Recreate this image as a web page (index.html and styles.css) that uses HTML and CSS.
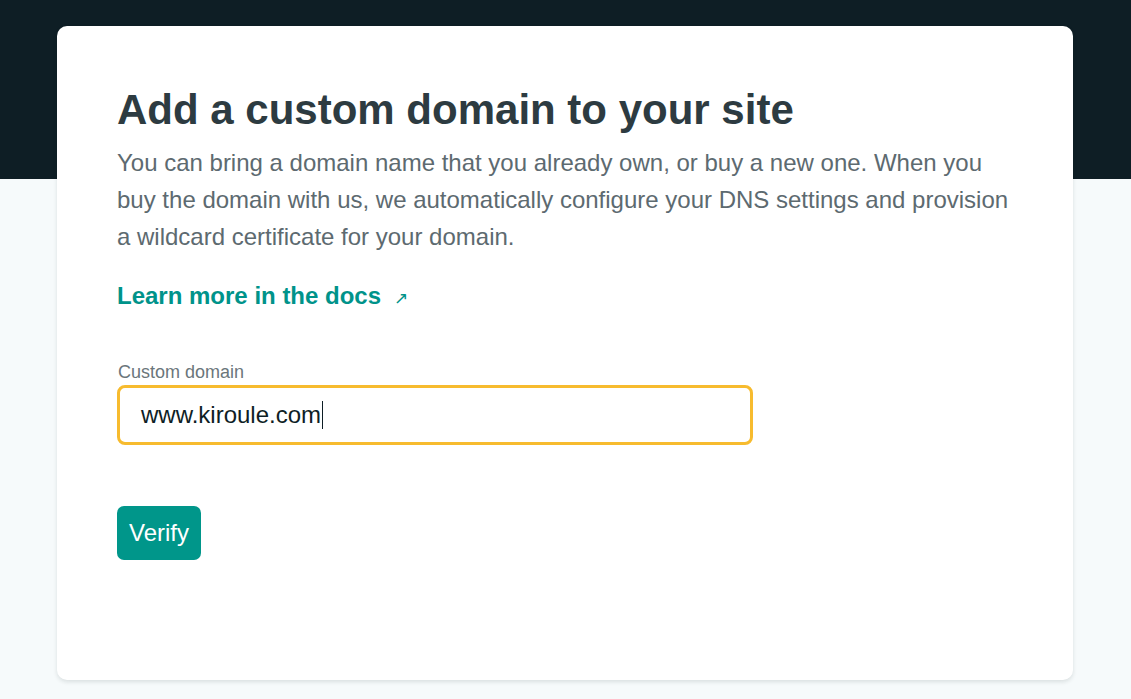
FILE: index.html
```html
<!DOCTYPE html>
<html>
<head>
<meta charset="utf-8">
<link rel="stylesheet" href="styles.css">
</head>
<body>
<div class="band"></div>
<main class="page">
  <section class="card">
    <h1 class="title">Add a custom domain to your site</h1>
    <p class="lead">You can bring a domain name that you already own, or buy a new one. When you buy the domain with us, we automatically configure your DNS settings and provision a wildcard certificate for your domain.</p>
    <a class="docs" href="#">Learn more in the docs <span class="arrow">↗</span></a>
    <label class="field-label" for="domain">Custom domain</label>
    <div class="input"><span class="value">www.kiroule.com</span><span class="caret"></span></div>
    <button class="btn">Verify</button>
  </section>
</main>
</body>
</html>
```
FILE: styles.css
```css
html, body { margin: 0; padding: 0; }
body {
  background: #f6fafb;
  font-family: "Liberation Sans", Arial, sans-serif;
  width: 1131px;
  height: 699px;
  overflow: hidden;
  position: relative;
}
.band {
  position: absolute;
  left: 0; top: 0; right: 0;
  height: 179px;
  background: #0e1e25;
}
.page {
  position: relative;
  padding: 26px 58px 0 57px;
}
.card {
  background: #fff;
  border-radius: 10px;
  box-shadow: 0 2px 4px rgba(14,30,37,0.12);
  height: 654px;
  box-sizing: border-box;
  padding: 60px 60px 0 60px;
  display: flex;
  flex-direction: column;
  align-items: flex-start;
}
.title {
  margin: 0;
  font-size: 42px;
  line-height: 48px;
  font-weight: 700;
  color: #2d3b41;
}
.lead {
  margin: 10px 0 0 0;
  font-size: 24px;
  line-height: 37px;
  color: #5d6a70;
}
.docs {
  margin-top: 26px;
  font-size: 24px;
  line-height: 30px;
  font-weight: 700;
  color: #00938a;
  text-decoration: none;
}
.arrow {
  font-size: 17px;
  font-weight: 400;
  margin-left: 6px;
}
.field-label {
  margin-top: 47px;
  margin-left: 1px;
  font-size: 18px;
  line-height: 22px;
  color: #6b767b;
}
.input {
  margin-top: 2px;
  width: 636px;
  height: 60px;
  box-sizing: border-box;
  border: 3px solid #f7bb2e;
  border-radius: 8px;
  padding: 0 0 0 21px;
  display: flex;
  align-items: center;
  font-size: 24px;
  color: #0e1e25;
}
.caret {
  display: inline-block;
  width: 1px;
  height: 28px;
  background: #0e1e25;
  margin-left: 1px;
}
.btn {
  margin-top: 61px;
  height: 54px;
  padding: 0 12px;
  border: 0;
  border-radius: 7px;
  background: #00968a;
  color: #fff;
  font-family: "Liberation Sans", Arial, sans-serif;
  font-size: 24px;
}
```
